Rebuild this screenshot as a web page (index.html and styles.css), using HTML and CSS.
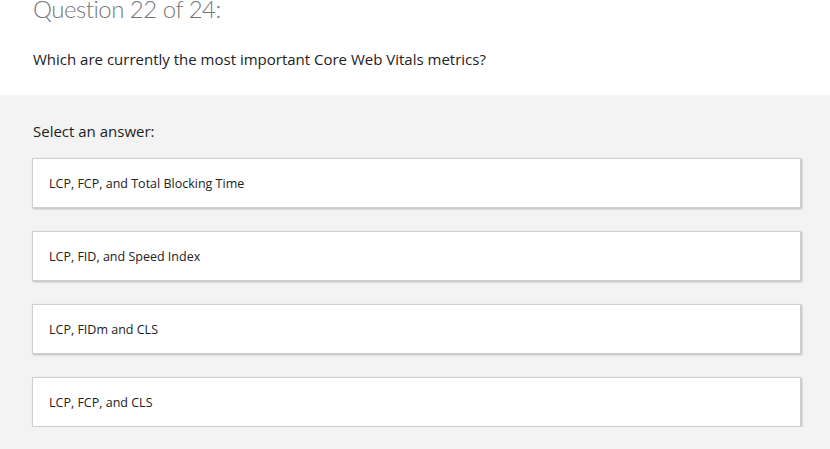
FILE: index.html
```html
<!DOCTYPE html>
<html>
<head>
<meta charset="utf-8">
<link rel="stylesheet" href="styles.css">
</head>
<body>
<div class="top">
  <h1 class="title">Question 22 of 24:</h1>
  <p class="question">Which are currently the most important Core Web Vitals metrics?</p>
</div>
<div class="answers">
  <p class="prompt">Select an answer:</p>
  <div class="list">
    <div class="card">LCP, FCP, and Total Blocking Time</div>
    <div class="card">LCP, FID, and Speed Index</div>
    <div class="card">LCP, FIDm and CLS</div>
    <div class="card">LCP, FCP, and CLS</div>
  </div>
</div>
</body>
</html>
```
FILE: styles.css
```css
html, body {
  margin: 0;
  padding: 0;
  background: #f3f3f3;
  font-family: "Open Sans", "Noto Sans", sans-serif;
  color: #222;
  overflow: hidden;
}
.top {
  display: flow-root;
  background: #fff;
  height: 95px;
  padding: 0 33px;
  box-sizing: border-box;
}
.title {
  margin: -8px 0 0;
  font-family: "Lato", "Open Sans", sans-serif;
  font-size: 24px;
  font-weight: 300;
  letter-spacing: -0.5px;
  line-height: 34px;
  color: #777;
}
.question {
  margin: 23px 0 0;
  font-size: 15px;
  line-height: 20px;
  color: #222;
}
.answers {
  padding: 0 29px 0 32px;
}
.prompt {
  margin: 0;
  padding-top: 26px;
  font-size: 15px;
  line-height: 20px;
  padding-left: 1px;
}
.list {
  margin-top: 17px;
  display: flex;
  flex-direction: column;
  gap: 23px;
}
.card {
  background: #fff;
  border: 1px solid #cfcfcf;
  box-shadow: 1px 1px 2px rgba(0,0,0,0.25);
  height: 48px;
  display: flex;
  align-items: center;
  padding-left: 16px;
  font-size: 12.5px;
  color: #222;
}
```
